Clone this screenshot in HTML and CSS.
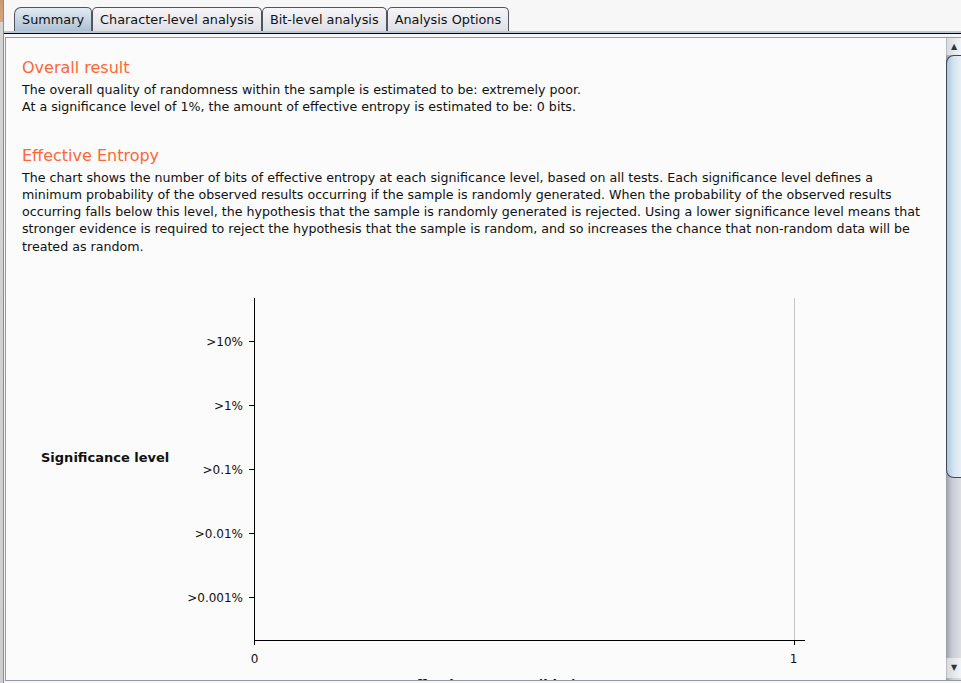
FILE: index.html
```html
<!DOCTYPE html>
<html>
<head>
<meta charset="utf-8">
<link rel="stylesheet" href="styles.css">
</head>
<body>
<div class="underlay"></div>
<div class="main">
  <div class="tabbar">
    <div class="tab selected">Summary</div>
    <div class="tab">Character-level analysis</div>
    <div class="tab">Bit-level analysis</div>
    <div class="tab">Analysis Options</div>
  </div>
  <div class="tabline"></div>
  <div class="panel">
    <div class="content">
      <h2 class="heading">Overall result</h2>
      <p class="text">The overall quality of randomness within the sample is estimated to be: extremely poor.<br>At a significance level of 1%, the amount of effective entropy is estimated to be: 0 bits.</p>
      <h2 class="heading">Effective Entropy</h2>
      <p class="text">The chart shows the number of bits of effective entropy at each significance level, based on all tests. Each significance level defines a minimum probability of the observed results occurring if the sample is randomly generated. When the probability of the observed results occurring falls below this level, the hypothesis that the sample is randomly generated is rejected. Using a lower significance level means that stronger evidence is required to reject the hypothesis that the sample is random, and so increases the chance that non-random data will be treated as random.</p>
      <svg class="chart" width="924" height="440" viewBox="0 0 924 440">
        <line x1="772.5" y1="28" x2="772.5" y2="370" stroke="#c4c4c4" stroke-width="1"/>
        <line x1="232.5" y1="28" x2="232.5" y2="371" stroke="#000" stroke-width="1"/>
        <line x1="232" y1="370.5" x2="783" y2="370.5" stroke="#000" stroke-width="1"/>
        <g stroke="#000" stroke-width="1">
          <line x1="227" y1="71.5" x2="232" y2="71.5"/>
          <line x1="227" y1="135.5" x2="232" y2="135.5"/>
          <line x1="227" y1="199.5" x2="232" y2="199.5"/>
          <line x1="227" y1="263.5" x2="232" y2="263.5"/>
          <line x1="227" y1="327.5" x2="232" y2="327.5"/>
          <line x1="232.5" y1="370" x2="232.5" y2="375"/>
          <line x1="772.5" y1="370" x2="772.5" y2="375"/>
        </g>
        <g class="ticklabel" text-anchor="end">
          <text x="221" y="76">&gt;10%</text>
          <text x="221" y="140">&gt;1%</text>
          <text x="221" y="204">&gt;0.1%</text>
          <text x="221" y="268">&gt;0.01%</text>
          <text x="221" y="332">&gt;0.001%</text>
        </g>
        <g class="ticklabel" text-anchor="middle">
          <text x="232.5" y="393">0</text>
          <text x="771.5" y="393">1</text>
        </g>
        <text class="axistitle" x="19" y="192">Significance level</text>
        <text class="axistitle" x="470" y="419" text-anchor="middle">Effective entropy (bits)</text>
      </svg>
    </div>
    <div class="scrollbar">
      <div class="sb-btn up">&#9650;</div>
      <div class="sb-track">
        <div class="sb-thumb"></div>
      </div>
      <div class="sb-btn down">&#9660;</div>
    </div>
  </div>
</div>
</body>
</html>
```

FILE: styles.css
```css
html, body {
  margin: 0;
  padding: 0;
}
body {
  width: 961px;
  height: 683px;
  overflow: hidden;
  display: flex;
  background: #f6f6f6;
  font-family: "DejaVu Sans", sans-serif;
  color: #111;
}
.underlay {
  width: 3px;
  flex: none;
  border-right: 1px solid #8c8c8c;
  background: linear-gradient(to bottom, #c99a72 0, #d7a57c 22px, #d4d4d4 22px, #cfcfcf 100%);
}
.main {
  flex: 1;
  display: flex;
  flex-direction: column;
  min-width: 0;
}
.tabbar {
  display: flex;
  align-items: flex-end;
  height: 31px;
  padding-left: 10px;
  border-bottom: 2px solid #b9c7d6;
  background: #f7f7f7;
}
.tab {
  height: 24px;
  box-sizing: border-box;
  padding: 0 7px;
  border: 1px solid #50545e;
  border-bottom: none;
  border-radius: 5px 5px 0 0;
  background: linear-gradient(to bottom, #f6f6f8, #dedfe5);
  font-size: 12.85px;
  line-height: 24px;
  color: #111;
  white-space: nowrap;
}
.tab.selected {
  background: linear-gradient(to bottom, #e3ebf3, #adc1d4);
  border-top-left-radius: 7px;
}
.tabline {
  height: 1px;
  background: #000;
  margin-bottom: 3px;
}
.panel {
  flex: 1;
  min-height: 0;
  margin: 0 0 2px 1px;
  display: flex;
  border: 1px solid #9499a3;
  border-right: none;
  background: #fbfbfb;
}
.content {
  flex: 1;
  min-width: 0;
  overflow: hidden;
  padding: 20px 21px 0 16px;
}
.heading {
  margin: 0 0 3px;
  font-size: 16px;
  line-height: 20px;
  font-weight: normal;
  color: #ff6633;
}
.text {
  margin: 0 0 30px;
  font-size: 12.65px;
  line-height: 17.25px;
  color: #111;
}
.chart {
  display: block;
  margin-top: -15px;
  overflow: visible;
}
.ticklabel {
  font-family: "DejaVu Sans", sans-serif;
  font-size: 12px;
  fill: #111;
}
.axistitle {
  font-family: "DejaVu Sans", sans-serif;
  font-size: 13px;
  font-weight: bold;
  fill: #111;
}
.scrollbar {
  width: 15px;
  flex: none;
  display: flex;
  flex-direction: column;
  background: linear-gradient(to right, #9c9ea6, #c9cbd2 40%, #dcdee4);
}
.sb-btn {
  height: 17px;
  flex: none;
  font-size: 8px;
  line-height: 17px;
  text-align: center;
  color: #333;
  background: linear-gradient(to right, #d9dbe0, #f3f4f6);
  border-left: 1px solid #b8bcc4;
}
.sb-btn.down {
  height: 20px;
  line-height: 20px;
  margin-bottom: 2px;
}
.sb-track {
  flex: 1;
  display: flex;
  flex-direction: column;
}
.sb-thumb {
  height: 423px;
  box-sizing: border-box;
  border: 1px solid #3c4a5a;
  border-right: none;
  border-radius: 8px 0 0 8px;
  background: linear-gradient(to right, #aec8de, #d6e5f1 50%, #e8f0f7);
}
```
